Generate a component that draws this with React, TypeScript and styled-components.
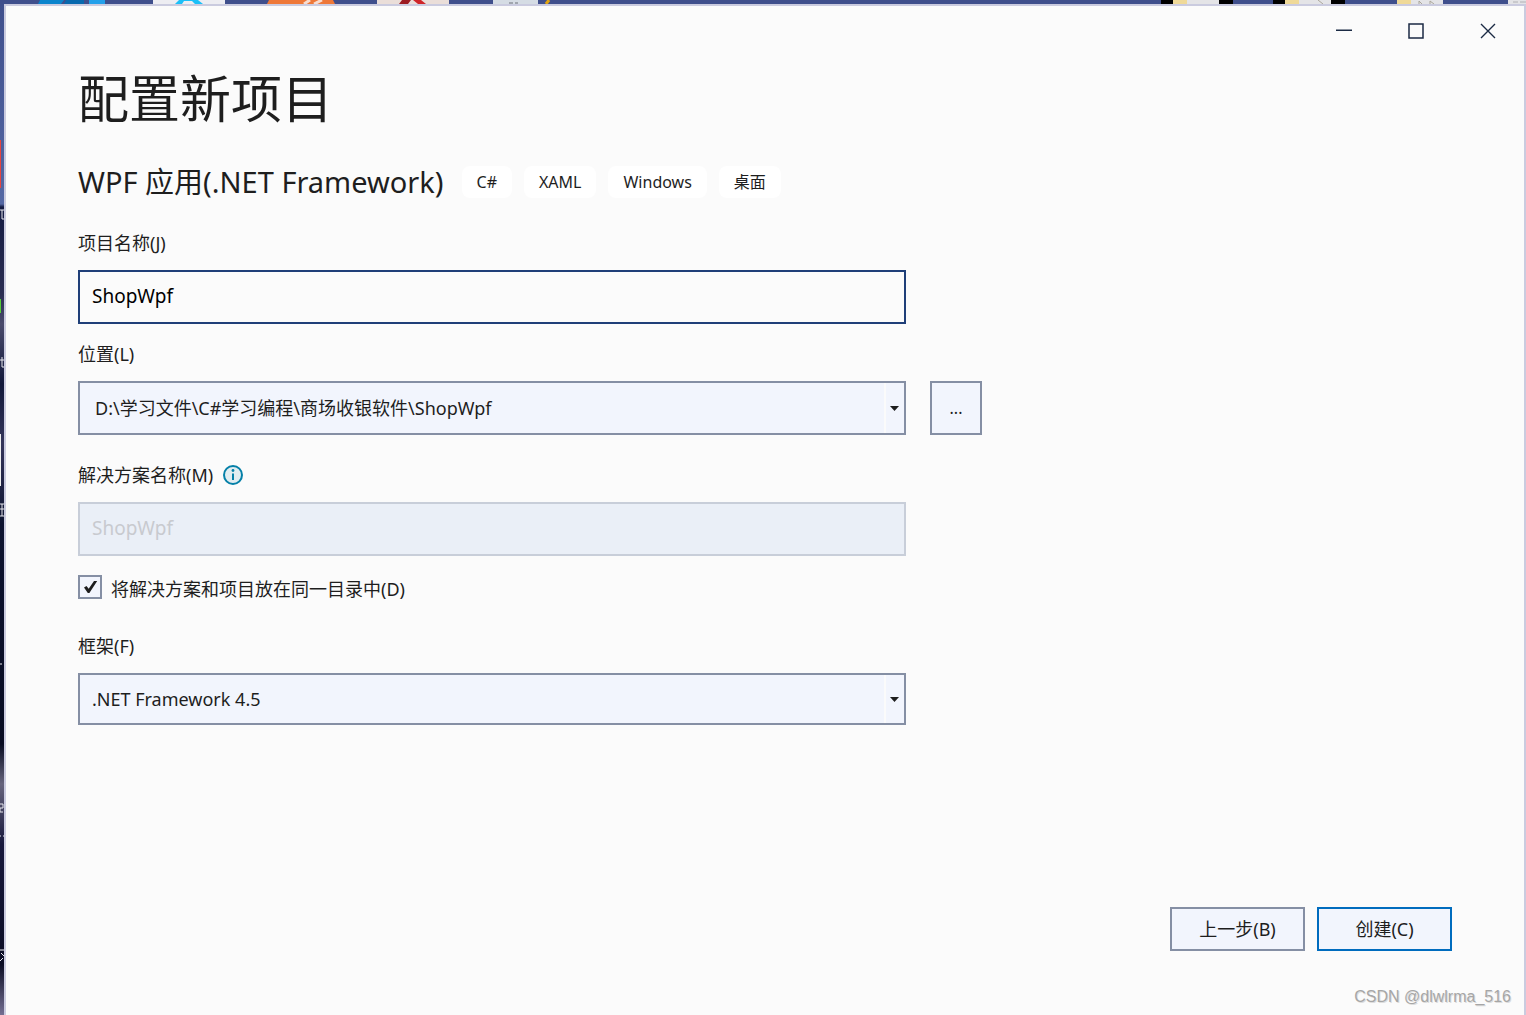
import React, { useState } from "react";
import styled, { createGlobalStyle } from "styled-components";

const GlobalStyle = createGlobalStyle`
  *, *::before, *::after { box-sizing: border-box; }
  body { margin: 0; }
  body, button, input, select {
    font-family: "Noto Sans", "Noto Sans CJK SC", sans-serif;
    font-size: 18px;
    color: #1e1e1e;
  }
`;

const colors = {
  surface: "#fbfbfb",
  control: "#f2f5fd",
  border: "#858fa4",
  focus: "#1f3f78",
  accent: "#006cbe",
};

const Desktop = styled.div`
  display: grid;
  grid-template: 4px minmax(0, 1fr) / 4px minmax(0, 1fr);
  min-height: 100vh;
  background: #3f4f8c;
`;

const TopWallpaper = styled.div`
  grid-column: 1 / -1;
  display: flex;
  justify-content: space-between;
  overflow: hidden;

  svg {
    display: block;
    flex: none;
  }
`;

const SideWallpaper = styled.div`
  overflow: hidden;
  background: linear-gradient(
    #3f4f8c 0,
    #5468a4 200px,
    #141b42 203px,
    #2a2d52 290px,
    #4a4b6c 320px,
    #11183a 380px,
    #34355a 440px,
    #0d1330 520px,
    #080c22 740px,
    #66647c 780px,
    #17183c 840px,
    #0b0d24 960px,
    #746f92 100%
  );

  svg {
    display: block;
  }
`;

const Window = styled.div`
  position: relative;
  display: flex;
  flex-direction: column;
  border: 2px solid #cacbdf;
  border-bottom: 0;
  background: ${colors.surface};
`;

const TitleBar = styled.header`
  display: flex;
  justify-content: flex-end;
  height: 50px;
`;

const CaptionButton = styled.button`
  display: grid;
  place-items: center;
  width: 72px;
  padding: 0;
  border: 0;
  background: transparent;
`;

const Content = styled.main`
  flex: 1;
  display: flex;
  flex-direction: column;
  padding: 8px 72px 64px;
`;

const Title = styled.h1`
  margin: 0;
  font-size: 51px;
  line-height: 68px;
  font-weight: 400;
`;

const TemplateRow = styled.div`
  display: flex;
  align-items: center;
  gap: 18px;
  margin: 34px 0 32px;
`;

const TemplateName = styled.h2`
  margin: 0;
  font-size: 29px;
  line-height: 32px;
  font-weight: 400;
`;

const Tags = styled.ul`
  display: flex;
  gap: 12px;
  margin: 0;
  padding: 0;
  list-style: none;
`;

const Tag = styled.li`
  padding: 0 15px;
  border-radius: 8px;
  background: #ffffff;
  font-size: 16px;
  line-height: 32px;
`;

const Form = styled.form`
  flex: 1;
  display: flex;
  flex-direction: column;
`;

const Field = styled.div<{ $after: number }>`
  display: flex;
  flex-direction: column;
  gap: 14px;
  margin-bottom: ${(p) => p.$after}px;
`;

const LabelRow = styled.div`
  display: flex;
  align-items: center;
  gap: 10px;
  line-height: 26px;
`;

const ControlRow = styled.div`
  display: flex;
  gap: 24px;
`;

const TextInput = styled.input`
  width: 100%;
  max-width: 828px;
  height: 54px;
  padding: 0 12px 2px;
  border: 2px solid ${colors.focus};
  border-radius: 0;
  outline: 0;
  background: ${colors.surface};
  font-size: 19px;
  color: #000000;

  &:disabled {
    border-color: #c8ced9;
    background: #eaeff7;
    color: #c8cacf;
  }
`;

const SelectBox = styled.div`
  position: relative;
  flex: 1;
  max-width: 828px;
`;

const Select = styled.select<{ $height: number; $indent: number }>`
  appearance: none;
  display: block;
  width: 100%;
  height: ${(p) => p.$height}px;
  padding: 0 24px 0 ${(p) => p.$indent}px;
  border: 2px solid ${colors.border};
  border-radius: 0;
  outline: 0;
  background: ${colors.control};
`;

const SelectArrow = styled.span`
  position: absolute;
  top: 2px;
  right: 2px;
  bottom: 2px;
  width: 20px;
  padding-right: 2px;
  display: grid;
  place-items: center;
  border-left: 2px solid ${colors.surface};
  pointer-events: none;
`;

const Button = styled.button<{ $primary?: boolean }>`
  width: 135px;
  height: 44px;
  padding: 0 0 2px;
  border: 2px solid ${(p) => (p.$primary ? colors.accent : colors.border)};
  background: ${colors.control};
`;

const BrowseButton = styled(Button)`
  width: 52px;
  height: 54px;
  padding: 0;
  font-size: 16px;
`;

const CheckRow = styled.div`
  display: flex;
  align-items: flex-start;
  gap: 9px;
  margin-bottom: 30px;
  line-height: 28px;
`;

const CheckBox = styled.span`
  position: relative;
  display: grid;
  width: 24px;
  height: 24px;

  svg {
    position: absolute;
    inset: 0;
    pointer-events: none;
  }
`;

const CheckInput = styled.input`
  appearance: none;
  width: 24px;
  height: 24px;
  margin: 0;
  border: 2px solid ${colors.border};
  background: ${colors.control};
`;

const Actions = styled.div`
  display: flex;
  justify-content: flex-end;
  gap: 12px;
  margin-top: auto;
`;

const Watermark = styled.span`
  position: absolute;
  right: 13px;
  bottom: 6px;
  font-family: "Liberation Sans", sans-serif;
  font-size: 16px;
  line-height: 24px;
  color: #a6a6a6;
  text-shadow: 1px 1px 0 #dddddd;
`;

function ShortcutsLeft() {
  return (
    <svg width="560" height="4" aria-hidden="true">
      <path d="M38 4l2-4h24l-3 4z" fill="#0a84cc" />
      <path d="M64 4l2-4h18v4z" fill="#0769ae" />
      <path d="M89 0h16v4H89z" fill="#23a0ea" />
      <path d="M153 0h72v4h-72z" fill="#ededf2" />
      <path d="M175 4l4-4h19l5 4h-8l-3-3h-8l-2 3z" fill="#1cc0f8" />
      <path d="M267 4l2-4h64l2 4z" fill="#ee7838" />
      <path d="M304 4l6-4M314 4l8-4" stroke="#f8ddd0" strokeWidth="3" />
      <path d="M377 0h72v4h-72z" fill="#eaded9" />
      <path d="M399 4l3-4h9l-3 4z" fill="#9c1b22" />
      <path d="M413 0h8l5 4h-8z" fill="#cf2529" />
      <path d="M493 0h45v4h-45z" fill="#d5dce4" />
      <path d="M509 3h4M515 3h3" stroke="#6c7078" />
      <path d="M546 4l3-4" stroke="#e2a411" strokeWidth="3" />
    </svg>
  );
}

function ShortcutsRight() {
  return (
    <svg width="366" height="4" aria-hidden="true">
      {[0, 112, 224].map((x) => (
        <g key={x} transform={`translate(${x} 0)`}>
          {x < 224 && <path d="M1 0h12v4H1z" fill="#000" />}
          <path d="M13 0h14v4H13z" fill="#efd998" />
          <path d="M27 0h32v4H27z" fill="#e4e4e7" />
          {x < 224 && <path d="M59 0h14v4H59z" fill="#000" />}
        </g>
      ))}
      <path d="M158 0l5 4M259 4v-3l3 3M270 4v-3l4 3" fill="none" stroke="#aaa69a" />
      <path d="M348 0h18v4h-18z" fill="#e3e3e6" />
      <path d="M353 2h5M360 2h6" stroke="#b0b0b4" />
    </svg>
  );
}

function SideShortcuts() {
  return (
    <svg width="4" height="1011" aria-hidden="true">
      <path d="M0 136h1v48H0z" fill="#e8453f" />
      <path d="M0 295h1v14H0z" fill="#55cc38" />
      <path d="M0 430h1v52H0z" fill="#ededed" />
      <path
        d="M0 206h4M2 206v9h2M2 353v10h2M0 356h4M0 500h4M0 505h4M2 500v12M0 512h4M0 660h2M0 800h3v4H0v4h3M0 832h1M3 832h1M0 946h4M1 949l3 3M0 957l3-3"
        fill="none"
        stroke="#e8e8ee"
      />
    </svg>
  );
}

function Arrow() {
  return (
    <svg width="9" height="5" viewBox="0 0 9 5" aria-hidden="true">
      <path d="M0 0h9L4.5 5z" fill="#1e1e1e" />
    </svg>
  );
}

function InfoIcon() {
  return (
    <svg width="20" height="20" viewBox="0 0 20 20" role="img" aria-label="信息">
      <circle cx="10" cy="10" r="9" fill="#e1edf1" stroke="#0580a8" strokeWidth="2" />
      <circle cx="10" cy="5.5" r="1.4" fill="#0580a8" />
      <path d="M9 8.500h2V15H9z" fill="#0580a8" />
    </svg>
  );
}

export default function App() {
  const [name, setName] = useState("ShopWpf");
  const [sameFolder, setSameFolder] = useState(true);

  return (
    <>
      <GlobalStyle />
      <Desktop>
        <TopWallpaper>
          <ShortcutsLeft />
          <ShortcutsRight />
        </TopWallpaper>
        <SideWallpaper>
          <SideShortcuts />
        </SideWallpaper>
        <Window>
          <TitleBar>
            <CaptionButton type="button" aria-label="最小化">
              <svg width="16" height="16" viewBox="0 0 16 16">
                <path d="M0 7.25h16" stroke="#1b2a44" strokeWidth="1.5" />
              </svg>
            </CaptionButton>
            <CaptionButton type="button" aria-label="最大化">
              <svg width="16" height="16" viewBox="0 0 16 16">
                <path d="M1 1h14v14H1z" fill="none" stroke="#1b2a44" strokeWidth="1.5" />
              </svg>
            </CaptionButton>
            <CaptionButton type="button" aria-label="关闭">
              <svg width="16" height="16" viewBox="0 0 16 16">
                <path d="M1 1l14 14M15 1L1 15" stroke="#1b2a44" strokeWidth="1.4" />
              </svg>
            </CaptionButton>
          </TitleBar>

          <Content>
            <Title>配置新项目</Title>
            <TemplateRow>
              <TemplateName>WPF 应用(.NET Framework)</TemplateName>
              <Tags>
                {["C#", "XAML", "Windows", "桌面"].map((tag) => (
                  <Tag key={tag}>{tag}</Tag>
                ))}
              </Tags>
            </TemplateRow>

            <Form onSubmit={(e) => e.preventDefault()}>
              <Field $after={17}>
                <LabelRow>
                  <label htmlFor="project">项目名称(J)</label>
                </LabelRow>
                <TextInput id="project" value={name} onChange={(e) => setName(e.target.value)} />
              </Field>

              <Field $after={27}>
                <LabelRow>
                  <label htmlFor="location">位置(L)</label>
                </LabelRow>
                <ControlRow>
                  <SelectBox>
                    <Select id="location" $height={54} $indent={15}>
                      <option>D:\学习文件\C#学习编程\商场收银软件\ShopWpf</option>
                    </Select>
                    <SelectArrow>
                      <Arrow />
                    </SelectArrow>
                  </SelectBox>
                  <BrowseButton type="button">...</BrowseButton>
                </ControlRow>
              </Field>

              <Field $after={19}>
                <LabelRow>
                  <label htmlFor="solution">解决方案名称(M)</label>
                  <InfoIcon />
                </LabelRow>
                <TextInput id="solution" value={name} disabled readOnly />
              </Field>

              <CheckRow>
                <CheckBox>
                  <CheckInput
                    id="same-folder"
                    type="checkbox"
                    checked={sameFolder}
                    onChange={(e) => setSameFolder(e.target.checked)}
                  />
                  {sameFolder && (
                    <svg width="24" height="24" viewBox="0 0 24 24" aria-hidden="true">
                      <path d="M6 12.500L8.500 11l2.200 2.700L16 6h3.200l-7.800 12H9.800z" fill="#1e1e1e" />
                    </svg>
                  )}
                </CheckBox>
                <label htmlFor="same-folder">将解决方案和项目放在同一目录中(D)</label>
              </CheckRow>

              <Field $after={32}>
                <LabelRow>
                  <label htmlFor="framework">框架(F)</label>
                </LabelRow>
                <ControlRow>
                  <SelectBox>
                    <Select id="framework" $height={52} $indent={12}>
                      <option>.NET Framework 4.5</option>
                    </Select>
                    <SelectArrow>
                      <Arrow />
                    </SelectArrow>
                  </SelectBox>
                </ControlRow>
              </Field>

              <Actions>
                <Button type="button">上一步(B)</Button>
                <Button type="submit" $primary>
                  创建(C)
                </Button>
              </Actions>
            </Form>
          </Content>
          <Watermark>CSDN @dlwlrma_516</Watermark>
        </Window>
      </Desktop>
    </>
  );
}
